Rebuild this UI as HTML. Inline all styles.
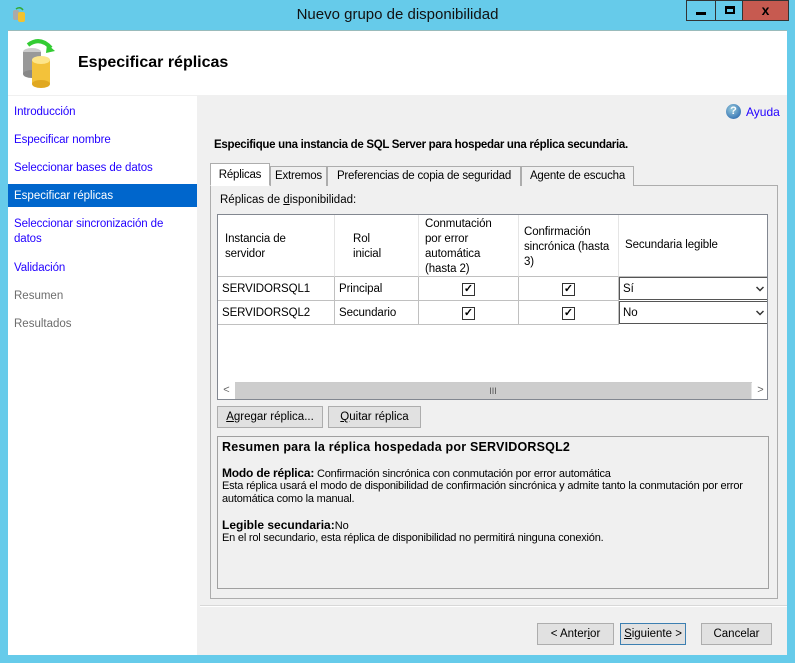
<!DOCTYPE html>
<html><head><meta charset="utf-8"><style>
*{margin:0;padding:0;box-sizing:border-box}
body{width:795px;height:663px;background:#66cbea;font-family:"Liberation Sans",sans-serif;font-size:11.5px;color:#000;position:relative;overflow:hidden}
.a{position:absolute;white-space:nowrap}
.nav{color:#2200ff;font-size:11.5px;letter-spacing:-0.1px}
.btn{position:absolute;background:#e1e1e1;border:1px solid #adadad;text-align:center;font-size:11.5px;line-height:20px}
.tab{position:absolute;top:166px;height:20px;border:1px solid #adadad;border-bottom:none;background:#f0f0f0;font-size:11.5px;letter-spacing:-0.2px;line-height:18px;text-align:center}
.cell{position:absolute;border-right:1px solid #c0c0c0;border-bottom:1px solid #c0c0c0;padding-left:4px;font-size:11.5px;letter-spacing:-0.1px}
.cb{position:absolute;width:13px;height:13px;border:1px solid #333;background:#fff;font-size:11px;line-height:11px;text-align:center;font-weight:bold}
</style></head><body>
<div class="a" style="left:12px;top:6px;width:14px;height:16px">
<svg width="14" height="16"><rect x="1" y="4" width="6" height="10" rx="2" fill="#aaa"/><rect x="6" y="6" width="7" height="10" rx="2" fill="#f2c230"/><path d="M4 3 Q8 0 11 4" stroke="#3a3" stroke-width="1.5" fill="none"/></svg></div>
<div class="a" style="left:0;width:795px;top:6px;text-align:center;font-size:15px;color:#111">Nuevo grupo de disponibilidad</div>
<div class="a" style="left:686px;top:0;width:30px;height:21px;border:1px solid #333;background:#66cbea"><div class="a" style="left:9px;top:11px;width:10px;height:3px;background:#000"></div></div>
<div class="a" style="left:715px;top:0;width:28px;height:21px;border:1px solid #333;background:#66cbea"><div class="a" style="left:9px;top:5px;width:10px;height:8px;border:2px solid #000;border-top-width:3px"></div></div>
<div class="a" style="left:742px;top:0;width:47px;height:21px;border:1px solid #333;background:#c75a50;text-align:center;font-weight:bold;font-size:14px;line-height:19px">x</div>
<div class="a" style="left:8px;top:30px;width:779px;height:625px;background:#f0f0f0"></div>
<div class="a" style="left:8px;top:30px;width:779px;height:65px;background:#fff;border-top:1px solid #9bb"></div>
<div class="a" style="left:18px;top:38px;width:45px;height:50px">
<svg width="45" height="50"><ellipse cx="14" cy="14" rx="9" ry="4" fill="#ccc"/><rect x="5" y="14" width="18" height="22" fill="#999"/><ellipse cx="14" cy="36" rx="9" ry="4" fill="#888"/><rect x="14" y="22" width="18" height="24" fill="#f3c23a"/><ellipse cx="23" cy="46" rx="9" ry="4" fill="#e0a820"/><ellipse cx="23" cy="22" rx="9" ry="4" fill="#fde58a"/><path d="M10 7 Q22 -2 33 10" stroke="#3c3" stroke-width="4" fill="none"/><path d="M29 6 L37 13 L28 15 Z" fill="#3c3"/></svg></div>
<div class="a" style="left:78px;top:54px;font-size:16px;font-weight:bold">Especificar réplicas</div>
<div class="a" style="left:8px;top:96px;width:189px;height:559px;background:#fff"></div>
<div class="a nav" style="left:14px;top:106px">Introducción</div>
<div class="a nav" style="left:14px;top:134px">Especificar nombre</div>
<div class="a nav" style="left:14px;top:162px">Seleccionar bases de datos</div>
<div class="a" style="left:8px;top:184px;width:189px;height:23px;background:#0066cc"></div>
<div class="a" style="left:14px;top:190px;color:#fff">Especificar réplicas</div>
<div class="a nav" style="left:14px;top:218px">Seleccionar sincronización de</div>
<div class="a nav" style="left:14px;top:233px">datos</div>
<div class="a nav" style="left:14px;top:262px">Validación</div>
<div class="a" style="left:14px;top:290px;color:#6d6d6d">Resumen</div>
<div class="a" style="left:14px;top:318px;color:#6d6d6d">Resultados</div>
<div class="a" style="left:726px;top:104px;width:15px;height:15px;border-radius:50%;background:radial-gradient(circle at 40% 35%,#9cd,#1a5aa8);color:#fff;font-size:11px;font-weight:bold;text-align:center;line-height:15px">?</div>
<div class="a" style="left:746px;top:105px;color:#2200ff;font-size:12px">Ayuda</div>
<div class="a" style="left:214px;top:139px;font-weight:bold;font-size:11.5px;letter-spacing:-0.3px">Especifique una instancia de SQL Server para hospedar una réplica secundaria.</div>
<div class="a" style="left:210px;top:185px;width:568px;height:414px;border:1px solid #adadad;background:#f0f0f0"></div>
<div class="tab" style="left:210px;top:163px;width:60px;height:23px;z-index:2;line-height:22px;background:#fff;border-bottom:1px solid #fff">Réplicas</div>
<div class="tab" style="left:270px;width:57px">Extremos</div>
<div class="tab" style="left:327px;width:194px">Preferencias de copia de seguridad</div>
<div class="tab" style="left:521px;width:113px">Agente de escucha</div>
<div class="a" style="left:220px;top:194px">Réplicas de <u>d</u>isponibilidad:</div>
<div class="a" style="left:217px;top:214px;width:551px;height:186px;border:1px solid #828790;background:#fff;overflow:hidden">
<div class="cell" style="left:0;top:0;width:117px;height:62px;border-right-color:#e5e5e5;padding-left:7px;padding-top:17px;line-height:15px">Instancia de<br>servidor</div>
<div class="cell" style="left:117px;top:0;width:84px;height:62px;border-right-color:#e5e5e5;padding-left:18px;padding-top:17px;line-height:15px">Rol<br>inicial</div>
<div class="cell" style="left:201px;top:0;width:100px;height:62px;border-right-color:#e5e5e5;padding-left:6px;padding-top:2px;line-height:15px">Conmutación<br>por error<br>automática<br>(hasta 2)</div>
<div class="cell" style="left:301px;top:0;width:100px;height:62px;border-right-color:#e5e5e5;padding-left:5px;padding-top:10px;line-height:15px">Confirmación<br>sincrónica (hasta<br>3)</div>
<div class="cell" style="left:401px;top:0;width:150px;height:62px;border-right:none;padding-left:6px;padding-top:24px">Secundaria legible</div>
<div class="cell" style="left:0;top:62px;width:117px;height:24px;line-height:24px">SERVIDORSQL1</div>
<div class="cell" style="left:117px;top:62px;width:84px;height:24px;line-height:24px">Principal</div>
<div class="cell" style="left:201px;top:62px;width:100px;height:24px"></div>
<div class="cell" style="left:301px;top:62px;width:100px;height:24px"></div>
<div class="cell" style="left:0;top:86px;width:117px;height:24px;line-height:24px">SERVIDORSQL2</div>
<div class="cell" style="left:117px;top:86px;width:84px;height:24px;line-height:24px">Secundario</div>
<div class="cell" style="left:201px;top:86px;width:100px;height:24px"></div>
<div class="cell" style="left:301px;top:86px;width:100px;height:24px"></div>
<div class="cb" style="left:244px;top:68px">✓</div><div class="cb" style="left:344px;top:68px">✓</div>
<div class="cb" style="left:244px;top:92px">✓</div><div class="cb" style="left:344px;top:92px">✓</div>
<div class="a" style="left:401px;top:62px;width:150px;height:23px;border:1px solid #555;padding-left:3px;line-height:22px">Sí<svg style="position:absolute;right:4px;top:8px" width="8" height="6"><path d="M0.5 1 L4 4.5 L7.5 1" stroke="#333" stroke-width="1.5" fill="none"/></svg></div>
<div class="a" style="left:401px;top:86px;width:150px;height:23px;border:1px solid #555;padding-left:3px;line-height:22px">No<svg style="position:absolute;right:4px;top:8px" width="8" height="6"><path d="M0.5 1 L4 4.5 L7.5 1" stroke="#333" stroke-width="1.5" fill="none"/></svg></div>
<div class="a" style="left:0;top:167px;width:551px;height:17px;background:#e6e6e6;border-top:1px solid #ccc"></div>
<div class="a" style="left:0;top:167px;width:17px;height:17px;background:#fff;text-align:center;font-size:11px;color:#666;line-height:16px">&lt;</div>
<div class="a" style="left:17px;top:168px;width:516px;height:16px;background:#cdcdcd;text-align:center;font-size:9px;color:#555;line-height:16px">III</div>
<div class="a" style="left:534px;top:167px;width:17px;height:17px;background:#fff;text-align:center;font-size:11px;color:#666;line-height:16px">&gt;</div>
</div>
<div class="btn" style="left:217px;top:406px;width:106px;height:22px"><u>A</u>gregar réplica...</div>
<div class="btn" style="left:328px;top:406px;width:93px;height:22px"><u>Q</u>uitar réplica</div>
<div class="a" style="left:217px;top:436px;width:552px;height:153px;border:1px solid #a0a0a0;background:#f0f0f0"></div>
<div class="a" style="left:222px;top:440px;font-weight:bold;font-size:12.5px;letter-spacing:0.2px">Resumen para la réplica hospedada por SERVIDORSQL2</div>
<div class="a" style="left:222px;top:466px;font-size:11px;letter-spacing:-0.2px"><b style="font-size:12px">Modo de réplica:</b> Confirmación sincrónica con conmutación por error automática</div>
<div class="a" style="left:222px;top:480px;font-size:11px;letter-spacing:-0.2px">Esta réplica usará el modo de disponibilidad de confirmación sincrónica y admite tanto la conmutación por error</div>
<div class="a" style="left:222px;top:493px;font-size:11px;letter-spacing:-0.2px">automática como la manual.</div>
<div class="a" style="left:222px;top:518px;font-size:11px"><b style="font-size:12px">Legible secundaria:</b>No</div>
<div class="a" style="left:222px;top:532px;font-size:11px;letter-spacing:-0.2px">En el rol secundario, esta réplica de disponibilidad no permitirá ninguna conexión.</div>
<div class="a" style="left:200px;top:605px;width:587px;height:1px;background:#d8d8d8"></div>
<div class="a" style="left:200px;top:606px;width:587px;height:1px;background:#fff"></div>
<div class="btn" style="left:537px;top:623px;width:77px;height:22px">&lt; Anter<u>i</u>or</div>
<div class="btn" style="left:620px;top:623px;width:66px;height:22px;border-color:#3c7fb1"><u>S</u>iguiente &gt;</div>
<div class="btn" style="left:701px;top:623px;width:71px;height:22px">Cancelar</div>
</body></html>
